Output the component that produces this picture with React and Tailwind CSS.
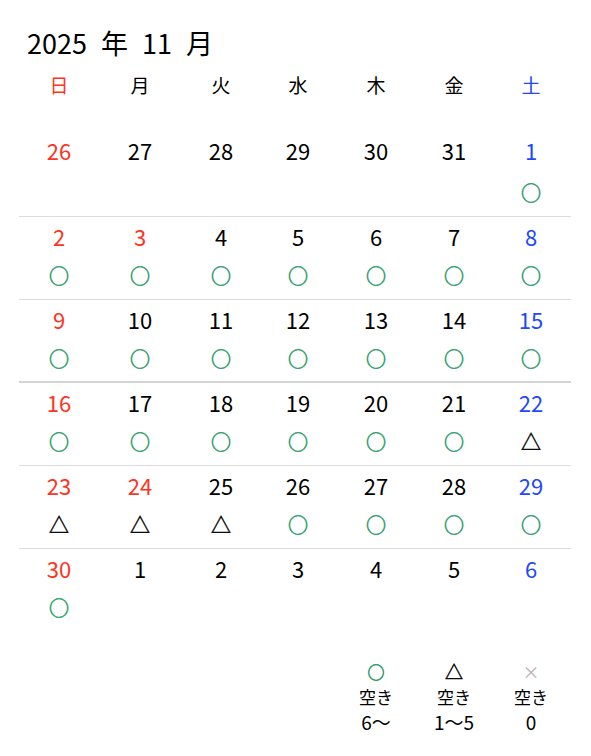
const RED = 'text-[#ff3322]'
const BLUE = 'text-[#2148ff]'

const HEAD = ['日', '月', '火', '水', '木', '金', '土']

// o = 空き6〜, t = 空き1〜5, '' = none
const WEEKS = [
  [['26', ''], ['27', ''], ['28', ''], ['29', ''], ['30', ''], ['31', ''], ['1', 'o']],
  [['2', 'o'], ['3', 'o'], ['4', 'o'], ['5', 'o'], ['6', 'o'], ['7', 'o'], ['8', 'o']],
  [['9', 'o'], ['10', 'o'], ['11', 'o'], ['12', 'o'], ['13', 'o'], ['14', 'o'], ['15', 'o']],
  [['16', 'o'], ['17', 'o'], ['18', 'o'], ['19', 'o'], ['20', 'o'], ['21', 'o'], ['22', 't']],
  [['23', 't'], ['24', 't'], ['25', 't'], ['26', 'o'], ['27', 'o'], ['28', 'o'], ['29', 'o']],
  [['30', 'o'], ['1', ''], ['2', ''], ['3', ''], ['4', ''], ['5', ''], ['6', '']],
]

// 3日 and 24日 are holidays
const HOLIDAY = { '1-1': true, '4-1': true }

const COLS = 'grid grid-cols-[80px_82px_80px_74px_82px_74px_80px]'

function Mark({ type, small }) {
  if (type === 'o')
    return (
      <span className={`text-[#2f9e6c] [-webkit-text-stroke:0.6px_currentColor] ${small ? 'text-[17px]' : 'text-[20px]'}`}>○</span>
    )
  if (type === 't')
    return (
      <span className={`text-black [-webkit-text-stroke:0.5px_currentColor] ${small ? 'text-[18px]' : 'text-[20px]'}`}>△</span>
    )
  if (type === 'x') return <span className="text-[#bcaeac] text-[17px]">×</span>
  return null
}

function dayColor(col, wi) {
  if (col === 0 || HOLIDAY[`${wi}-${col}`]) return RED
  if (col === 6) return BLUE
  return 'text-black'
}

export default function App() {
  return (
    <div
      className="w-[591px] h-[756px] bg-white overflow-hidden"
      style={{ fontFamily: '"Noto Sans CJK JP", "Noto Sans", sans-serif' }}
    >
      <h1 className="pl-[27px] pt-[26px] text-[27px] leading-[33px] font-normal text-black [word-spacing:8px]">
        2025 年 11 月
      </h1>

      <div className="ml-[19px] w-[552px]">
        {/* weekday header */}
        <div className={`${COLS} mt-[14px] h-[58px]`}>
          {HEAD.map((h, i) => (
            <div
              key={h}
              className={`text-center text-[19px] leading-[24px] ${i === 0 ? RED : i === 6 ? BLUE : 'text-black'}`}
            >
              {h}
            </div>
          ))}
        </div>

        {WEEKS.map((week, wi) => (
          <div
            key={wi}
            className={`${COLS} ${wi === 0 ? '' : wi === 3 ? 'border-t-2 border-[#d4d4d4]' : 'border-t border-[#dcdcdc]'}`}
          >
            {week.map(([d, m], ci) => (
              <div
                key={ci}
                className={`flex flex-col items-center pt-[8px] ${wi === 2 ? 'pb-[12px]' : 'pb-[13px]'}`}
              >
                <div className={`text-[22px] leading-[22px] ${dayColor(ci, wi)}`}>{d}</div>
                <div className={`h-[21px] leading-[21px] flex items-center ${wi === 0 ? 'mt-[21px]' : 'mt-[18px]'}`}>
                  <Mark type={m} />
                </div>
              </div>
            ))}
          </div>
        ))}

        {/* legend */}
        <div className={`${COLS} mt-[28px] text-[17px] text-black`}>
          <div className="col-start-5 flex flex-col items-center leading-[25px]">
            <Mark type="o" small />
            <span>空き</span>
            <span className="text-[19px] leading-[26px]">6〜</span>
          </div>
          <div className="flex flex-col items-center leading-[25px]">
            <Mark type="t" small />
            <span>空き</span>
            <span className="text-[19px] leading-[26px]">1〜5</span>
          </div>
          <div className="flex flex-col items-center leading-[25px]">
            <Mark type="x" />
            <span>空き</span>
            <span className="text-[19px] leading-[26px]">0</span>
          </div>
        </div>
      </div>
    </div>
  )
}
